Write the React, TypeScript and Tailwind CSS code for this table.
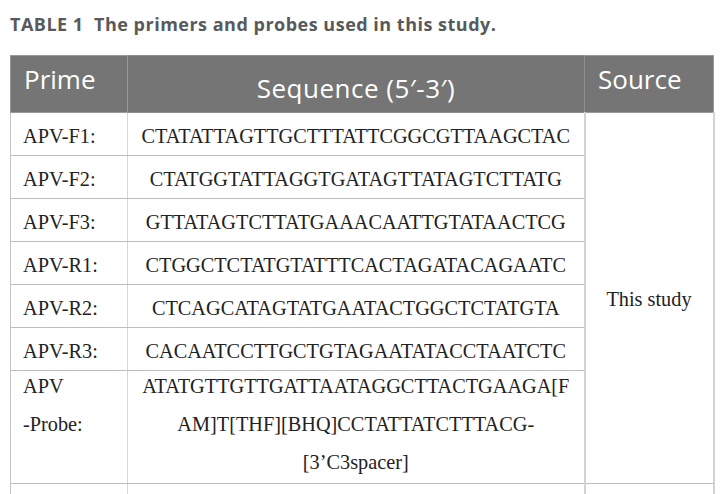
import React from "react";

const rows: [string, string][] = [
  ["APV-F1:", "CTATATTAGTTGCTTTATTCGGCGTTAAGCTAC"],
  ["APV-F2:", "CTATGGTATTAGGTGATAGTTATAGTCTTATG"],
  ["APV-F3:", "GTTATAGTCTTATGAAACAATTGTATAACTCG"],
  ["APV-R1:", "CTGGCTCTATGTATTTCACTAGATACAGAATC"],
  ["APV-R2:", "CTCAGCATAGTATGAATACTGGCTCTATGTA"],
  ["APV-R3:", "CACAATCCTTGCTGTAGAATATACCTAATCTC"],
];

export default function App() {
  const serif = "font-['Liberation_Serif',serif] text-[20.3px] text-[#222222]";
  return (
    <div className="bg-white w-[722px] h-[494px] overflow-hidden pl-[10px]">
      <div className="pt-[11px] text-[18px] leading-[26px] font-bold tracking-[0.5px] text-[#58595b] font-['Open_Sans',sans-serif] whitespace-pre">
        {"TABLE 1  The primers and probes used in this study."}
      </div>
      <table className="mt-[18px] w-[703px] table-fixed border-collapse">
        <colgroup>
          <col className="w-[117px]" />
          <col className="w-[457px]" />
          <col className="w-[129px]" />
        </colgroup>
        <thead>
          <tr className="h-[57px] bg-[#747574] text-white font-['Open_Sans',sans-serif] text-[26px] font-normal">
            <th className="align-top text-left pl-[13px] pt-[6px] leading-[35px] font-normal border border-[#999a99]">
              Prime
            </th>
            <th className="align-top text-center pt-[15px] leading-[35px] font-normal tracking-[0.5px] border border-[#8d8e8d]">
              Sequence (5′-3′)
            </th>
            <th className="align-top text-left pl-[13px] pt-[6px] leading-[35px] font-normal border border-[#999a99]">
              Source
            </th>
          </tr>
        </thead>
        <tbody className={serif}>
          {rows.map((r, i) => (
            <tr key={r[0]} className="h-[43px]">
              <td className="pl-[12px] pt-[4px] leading-[36px] align-middle border-l border-l-[#c4c4c4] border-r border-r-[#d6d6d6] border-b border-b-[#bdbdbd]">
                {r[0]}
              </td>
              <td className="text-center pt-[4px] leading-[36px] align-middle whitespace-nowrap border-b border-b-[#bdbdbd]">
                {r[1]}
              </td>
              {i === 0 && (
                <td
                  rowSpan={7}
                  className="text-center align-middle leading-[36px] pt-[2px] border-l-2 border-l-[#d3d3d3] border-r-2 border-r-[#d3d3d3] border-b border-b-[#bdbdbd]"
                >
                  This study
                </td>
              )}
            </tr>
          ))}
          <tr className="h-[113px]">
            <td className="pl-[12px] pr-0 pt-0 pb-0 align-top leading-[38px] border-l border-l-[#c4c4c4] border-r border-r-[#d6d6d6] border-b border-b-[#bdbdbd]">
              <div className="-mt-[4px]">
                <div>APV</div>
                <div>-Probe:</div>
              </div>
            </td>
            <td className="text-center align-top p-0 leading-[38px] whitespace-nowrap border-b border-b-[#bdbdbd]">
              <div className="-mt-[4px]">
                <div>ATATGTTGTTGATTAATAGGCTTACTGAAGA[F</div>
                <div>AM]T[THF][BHQ]CCTATTATCTTTACG-</div>
                <div>[3’C3spacer]</div>
              </div>
            </td>
          </tr>
          <tr className="h-[30px]">
            <td className="border-l border-l-[#c4c4c4] border-r border-r-[#d6d6d6]"></td>
            <td></td>
            <td className="border-l-2 border-l-[#d3d3d3] border-r-2 border-r-[#d3d3d3]"></td>
          </tr>
        </tbody>
      </table>
    </div>
  );
}
